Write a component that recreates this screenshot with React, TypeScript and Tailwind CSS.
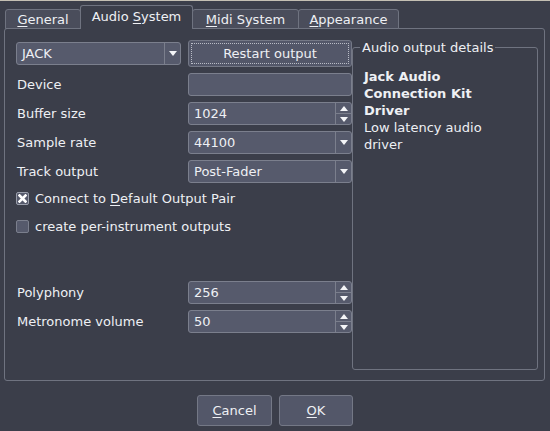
import type { ReactNode } from "react";

const Tri = ({ up = false }: { up?: boolean }) => (
  <svg width="8" height="5" viewBox="0 0 8 5" className="block">
    <path d={up ? "M0 5h8L4 0z" : "M0 0h8L4 5z"} fill="#f4f5f8" />
  </svg>
);

function Ul({ children }: { children: ReactNode }) {
  return <span className="underline underline-offset-[2px] decoration-1">{children}</span>;
}

function Combo({ value, className = "" }: { value: string; className?: string }) {
  return (
    <div className={`flex h-[23px] rounded-[3px] border border-[#7b7f8d] bg-[#565a6c] ${className}`}>
      <div className="flex flex-1 items-center pl-[5px]">{value}</div>
      <div className="flex w-[16px] items-center justify-center border-l border-[#7b7f8d]">
        <Tri />
      </div>
    </div>
  );
}

function Spin({ value }: { value: string }) {
  return (
    <div className="flex h-[23px] w-[164px] rounded-[3px] border border-[#7b7f8d] bg-[#565a6c]">
      <div className="flex flex-1 items-center pl-[5px]">{value}</div>
      <div className="flex w-[16px] flex-col border-l border-[#7b7f8d]">
        <div className="flex flex-1 items-center justify-center border-b border-[#7b7f8d]">
          <Tri up />
        </div>
        <div className="flex flex-1 items-center justify-center">
          <Tri />
        </div>
      </div>
    </div>
  );
}

function Row({ label, children }: { label: string; children: ReactNode }) {
  return (
    <div className="mt-[6px] flex h-[23px] items-center">
      <div className="flex-1 pl-px">{label}</div>
      {children}
    </div>
  );
}

function Check({ checked, children }: { checked?: boolean; children: ReactNode }) {
  return (
    <div className="flex h-[22px] items-center gap-[6px]">
      <div
        className={`flex h-[13px] w-[13px] items-center justify-center rounded-[2px] border ${
          checked ? "border-[#9a9eab] bg-[#565a6c]" : "border-[#7b7f8d] bg-[#565a6c]"
        }`}
      >
        {checked && (
          <svg width="9" height="9" viewBox="0 0 9 9">
            <path d="M1.5 1.5l6 6M7.5 1.5l-6 6" stroke="#fff" strokeWidth="2.6" strokeLinecap="square" />
          </svg>
        )}
      </div>
      <span>{children}</span>
    </div>
  );
}

function Tab({ children, active, w }: { children: ReactNode; active?: boolean; w: string }) {
  if (active)
    return (
      <div
        className={`-ml-px flex h-[24px] items-center justify-center rounded-t-[3px] border border-b-0 border-[#6f7380] bg-[#3b3e4a] pb-[2px] ${w}`}
      >
        {children}
      </div>
    );
  return (
    <div
      className={`-ml-px flex h-[20px] items-center justify-center rounded-t-[3px] border border-[#6f7380] bg-[#4a4d5b] first:ml-0 ${w}`}
    >
      {children}
    </div>
  );
}

function Button({ children, className = "" }: { children: ReactNode; className?: string }) {
  return (
    <div
      className={`flex items-center justify-center rounded-[3px] border border-[#747886] bg-[#535769] ${className}`}
    >
      {children}
    </div>
  );
}

export default function App() {
  return (
    <div className="h-[431px] w-[550px] overflow-hidden bg-[#3b3e4a] text-[13px] leading-[15px] text-[#eef0f4] [font-family:'DejaVu_Sans',sans-serif]">
      <div className="h-px bg-[#c4bfb3]" />
      <div className="relative z-10 -mb-px flex items-end pl-[5px] pt-[4px]">
        <Tab w="w-[76px]">
          <span>
            <Ul>G</Ul>eneral
          </span>
        </Tab>
        <Tab w="w-[113px]" active>
          <span>
            Audio <Ul>S</Ul>ystem
          </span>
        </Tab>
        <Tab w="w-[107px]">
          <span>
            <Ul>M</Ul>idi System
          </span>
        </Tab>
        <Tab w="w-[101px]">
          <span>
            <Ul>A</Ul>ppearance
          </span>
        </Tab>
      </div>

      <div className="ml-[4px] mr-[5px] flex h-[353px] rounded-[3px] border border-[#6f7380] pl-[11px] pt-[11px]">
        <div className="w-[336px]">
          <div className="flex h-[27px] items-center">
            <Combo value="JACK" className="h-[22px] w-[165px]" />
            <div className="flex-1" />
            <Button className="h-[27px] w-[164px] outline-1 outline-dotted -outline-offset-4 outline-[#b9bcc6]">
              Restart output
            </Button>
          </div>
          <Row label="Device">
            <div className="h-[23px] w-[164px] rounded-[3px] border border-[#7b7f8d] bg-[#565a6c]" />
          </Row>
          <Row label="Buffer size">
            <Spin value="1024" />
          </Row>
          <Row label="Sample rate">
            <Combo value="44100" className="w-[164px]" />
          </Row>
          <Row label="Track output">
            <Combo value="Post-Fader" className="w-[164px]" />
          </Row>
          <div className="mt-[4px]">
            <Check checked>
              Connect to <Ul>D</Ul>efault Output Pair
            </Check>
          </div>
          <div className="mt-[6px]">
            <Check>create per-instrument outputs</Check>
          </div>
          <div className="mt-[44px]">
            <Row label="Polyphony">
              <Spin value="256" />
            </Row>
            <Row label="Metronome volume">
              <Spin value="50" />
            </Row>
          </div>
        </div>

        <fieldset className="h-[330px] w-[186px] rounded-[3px] border border-[#6f7380] pl-[11px] pr-[6px]">
          <legend className="-ml-[4px] px-[2px]">Audio output details</legend>
          <div className="mt-[13px] w-[150px] leading-[17px]">
            <div className="font-bold">Jack Audio Connection Kit Driver</div>
            <div>Low latency audio driver</div>
          </div>
        </fieldset>
      </div>

      <div className="mt-[14px] flex justify-center gap-[7px]">
        <Button className="h-[31px] w-[75px]">
          <span>
            <Ul>C</Ul>ancel
          </span>
        </Button>
        <Button className="h-[31px] w-[74px]">
          <span>
            <Ul>O</Ul>K
          </span>
        </Button>
      </div>
    </div>
  );
}
